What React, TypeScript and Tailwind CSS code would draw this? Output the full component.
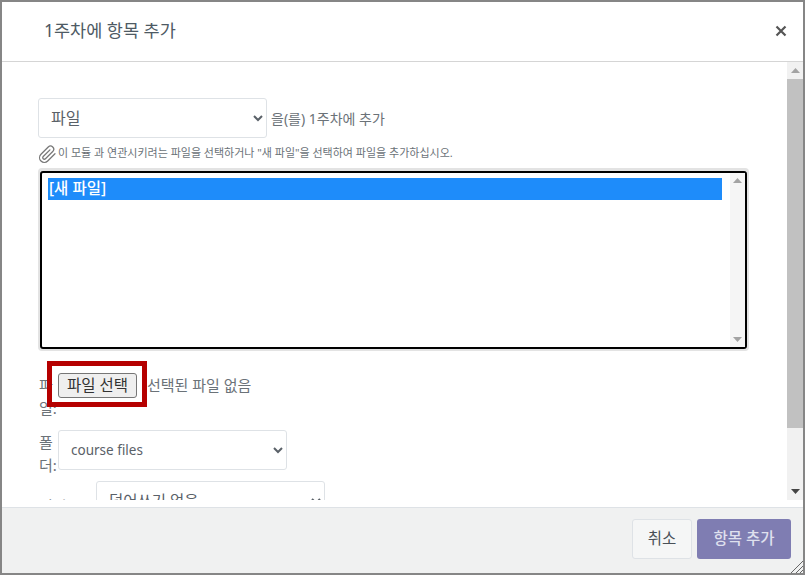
const fontStack = "font-['Noto_Sans','Noto_Sans_CJK_KR',sans-serif]";

const Label = ({ text, width }: { text: string; width: string }) => (
  <div className={`${width} shrink-0 text-[15px] leading-[23px] text-[#6b7278] break-all`}>{text}</div>
);

const Select = ({ value, width, size }: { value: string; width: string; size: string }) => (
  <select
    defaultValue={value}
    className={`${width} ${size} h-10 shrink-0 rounded-[3px] border border-[#dee2e6] bg-white pl-2 pr-2 text-[#5a6168]`}
  >
    <option>{value}</option>
  </select>
);

const ArrowUp = ({ color }: { color: string }) => (
  <svg width="9" height="5" viewBox="0 0 9 5">
    <path d="M4.5 0L9 5H0z" fill={color} />
  </svg>
);

const ArrowDown = ({ color }: { color: string }) => (
  <svg width="9" height="5" viewBox="0 0 9 5">
    <path d="M0 0H9L4.5 5z" fill={color} />
  </svg>
);

export default function App() {
  return (
    <div className={`${fontStack} flex h-[575px] w-[805px] flex-col overflow-hidden border-2 border-[#868686] bg-white text-[#495057]`}>
      {/* Header */}
      <div className="flex h-[60px] shrink-0 items-center justify-between border-b border-[#d5d5d5] pb-px pl-[42px] pr-[16px]">
        <h5 className="text-[17.5px] leading-none text-[#4e5a64]">1주차에 항목 추가</h5>
        <svg width="12" height="12" viewBox="0 0 12 12">
          <path d="M1.5 1.5L10.5 10.5M10.5 1.5L1.5 10.5" stroke="#555" strokeWidth="2.2" />
        </svg>
      </div>

      {/* Body */}
      <div className="flex h-[438px] shrink-0">
        <div className="relative flex-1 overflow-hidden pl-9 pt-9">
          <div className="flex items-center gap-[4px]">
            <Select value="파일" width="w-[229px]" size="text-[16px]" />
            <span className="text-[14px] text-[#6b7278]">을(를) 1주차에 추가</span>
          </div>

          <div className="mt-[6px] flex h-[18px] items-center gap-px text-[11px] text-[#6b7278]">
            <svg width="19" height="19" viewBox="0 0 24 24" fill="none" stroke="#777" strokeWidth="1.6" strokeLinecap="round" strokeLinejoin="round" className="mt-[3px]">
              <path d="M21.44 11.05l-9.19 9.19a6 6 0 0 1-8.49-8.49l9.19-9.19a4 4 0 0 1 5.66 5.66l-9.2 9.19a2 2 0 0 1-2.83-2.83l8.49-8.48" />
            </svg>
            <span>이 모듈 과 연관시키려는 파일을 선택하거나 "새 파일"을 선택하여 파일을 추가하십시오.</span>
          </div>

          {/* File list */}
          <div className="mt-[6px] h-[183px] w-[711px] rounded-[4px] border-2 border-t-[3px] border-[#e3e3e3]">
            <div className="flex h-[178px] rounded-[3px] border-2 border-black bg-white">
              <div className="flex-1 pl-[6px] pt-[5px] pr-2">
                <div className="h-[22px] bg-[#1e8cfa] pl-px text-[15.5px] font-medium leading-[20px] text-white">[새 파일]</div>
              </div>
              <div className="flex w-[15px] flex-col items-center justify-between bg-[#f5f5f5] py-[5px]">
                <ArrowUp color="#a3a3a3" />
                <ArrowDown color="#a3a3a3" />
              </div>
            </div>
          </div>

          {/* File picker */}
          <div className="relative mt-[22px] flex items-start">
            <Label text="파일:" width="w-[19px] ml-px pt-px" />
            <button className="h-[25px] w-[79px] rounded-[3px] border border-[#767676] bg-[#efefef] text-[15.5px] leading-none text-[#333]">
              파일 선택
            </button>
            <span className="ml-[10px] text-[15px] leading-[25px] text-[#6b7278]">선택된 파일 없음</span>
            <div className="absolute left-[9px] top-[-12px] h-[46px] w-[100px] border-[5px] border-[#b50000]" />
          </div>

          <div className="mt-[10px] flex h-10 items-start">
            <Label text="폴더:" width="w-[19px] ml-px pt-px" />
            <Select value="course files" width="w-[229px]" size="text-[13.5px]" />
          </div>

          <div className="mt-[11px] flex h-10 items-start">
            <Label text="덮어쓰기:" width="w-[57px] ml-px pt-[14px]" />
            <Select value="덮어쓰기 없음" width="w-[229px]" size="text-[15.5px]" />
          </div>
        </div>

        {/* Scrollbar */}
        <div className="flex w-[16px] shrink-0 flex-col items-center bg-[#f1f1f1]">
          <div className="flex h-[17px] items-center"><ArrowUp color="#a3a3a3" /></div>
          <div className="h-[349px] w-full bg-[#c1c1c1]" />
          <div className="mt-auto flex h-[17px] items-center"><ArrowDown color="#444" /></div>
        </div>
      </div>
      <div className="h-[7px] shrink-0" />

      {/* Footer */}
      <div className="relative flex flex-1 items-center justify-end gap-[5px] border-t border-[#dee2e6] bg-[#f0f1f1] pb-[3px] pr-3">
        <button className="h-[40px] w-[60px] rounded-[3px] border border-[#dee2e6] bg-[#f5f6f6] text-[15.5px] text-[#495057]">취소</button>
        <button className="h-[40px] w-[94px] rounded-[3px] bg-[#7f7db2] text-[15.5px] font-medium text-[#dfe0ee]">항목 추가</button>
        <svg width="13" height="13" viewBox="0 0 13 13" className="absolute bottom-0 right-0">
          <path d="M1 13L13 1M6 13L13 6M10 13L13 10" stroke="#666" strokeWidth="1" />
        </svg>
      </div>
    </div>
  );
}
